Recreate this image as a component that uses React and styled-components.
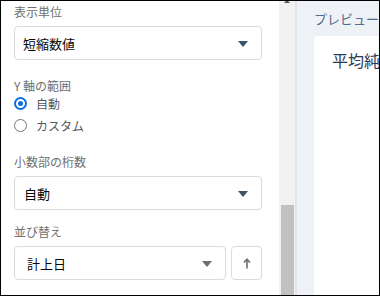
import React from "react";
import styled, { createGlobalStyle } from "styled-components";

const Global = createGlobalStyle`
  html, body { margin: 0; padding: 0; background: #fff; }
  body { font-family: "Noto Sans CJK JP", "Noto Sans", sans-serif; }
  * { box-sizing: border-box; }
`;

const Frame = styled.div`
  width: 380px;
  height: 296px;
  border: 1px solid #000;
  display: flex;
  overflow: hidden;
  background: #fff;
`;

const Settings = styled.div`
  width: 278px;
  flex: none;
  padding: 2px 17px 0 13px;
  display: flex;
  flex-direction: column;
  overflow: hidden;
`;

const Field = styled.div`
  display: flex;
  flex-direction: column;
  gap: ${(p) => p.$gap ?? 5}px;
  margin-bottom: ${(p) => p.$after ?? 0}px;
`;

const Label = styled.div`
  font-size: 12px;
  line-height: 18px;
  color: #706e6b;
  height: 18px;
  white-space: nowrap;
`;

const GroupLabel = styled(Label)`
  line-height: 16px;
  height: 16px;
  margin-top: 1px;
`;

const Row = styled.div`
  display: flex;
  gap: 5px;
`;

const Select = styled.div`
  flex: 1 0 auto;
  min-width: 0;
  height: 34px;
  border: 1px solid #dddbda;
  border-radius: 4px;
  display: flex;
  align-items: center;
  justify-content: space-between;
  padding: 0 ${(p) => p.$padR ?? 13}px 0 ${(p) => p.$padL ?? 8}px;
  font-size: 13px;
  color: #080707;
  background: #fff;
`;

const Caret = styled.span`
  width: 0;
  height: 0;
  border-left: 5px solid transparent;
  border-right: 5px solid transparent;
  border-top: 6px solid ${(p) => p.$color};
  margin-top: 1px;
`;

const IconButton = styled.div`
  width: 31px;
  height: 34px;
  flex: none;
  border: 1px solid #dddbda;
  border-radius: 4px;
  display: flex;
  align-items: center;
  justify-content: center;
  color: #706e6b;
`;

const RadioGroup = styled.div`
  display: flex;
  flex-direction: column;
  gap: 4px;
  margin-bottom: 19px;
`;

const RadioRow = styled.label`
  height: 18px;
  display: flex;
  align-items: center;
  gap: 9px;
  font-size: 12px;
  color: #54565a;
`;

const RadioDot = styled.span`
  width: 13px;
  height: 13px;
  border-radius: 50%;
  flex: none;
  border: ${(p) => (p.$on ? "2px solid #0b6fde" : "1px solid #767676")};
  background: #fff;
  display: flex;
  align-items: center;
  justify-content: center;
  &::after {
    content: "";
    width: 5px;
    height: 5px;
    border-radius: 50%;
    background: ${(p) => (p.$on ? "#0b6fde" : "transparent")};
  }
`;

const Track = styled.div`
  width: 16px;
  flex: none;
  background: #f1f1f1;
  display: flex;
  flex-direction: column;
  justify-content: space-between;
  align-items: center;
  overflow: hidden;
`;

const UpArrow = styled.span`
  width: 0;
  height: 0;
  border-left: 3px solid transparent;
  border-right: 3px solid transparent;
  border-bottom: 3px solid #505050;
  margin-top: -1px;
`;

const Thumb = styled.div`
  width: 13px;
  height: 90px;
  background: #c1c1c1;
  margin-left: 1px;
`;

const Divider = styled.div`
  width: 2px;
  flex: none;
  background: #e2e3ee;
`;

const Preview = styled.div`
  flex: 1;
  background: #eef1f6;
  padding: 9px 0 0 17px;
  display: flex;
  flex-direction: column;
  gap: 8px;
  overflow: hidden;
  min-width: 0;
`;

const PreviewTitle = styled.div`
  font-size: 13px;
  line-height: 18px;
  color: #54698d;
  white-space: nowrap;
`;

const Card = styled.div`
  flex: 1;
  width: 120px;
  background: #fff;
  border-radius: 4px 0 0 0;
  padding: 12px 0 0 18px;
  white-space: nowrap;
  font-size: 16px;
  line-height: 24px;
  color: #2b3a55;
`;

function UpIcon() {
  return (
    <svg width="8" height="11" viewBox="0 0 8 11" fill="none">
      <path d="M4 10.5V1.5" stroke="#706e6b" strokeWidth="1.6" />
      <path d="M1 4.5L4 1.2L7 4.5" stroke="#706e6b" strokeWidth="1.6" fill="none" />
    </svg>
  );
}

export default function App() {
  return (
    <>
      <Global />
      <Frame>
        <Settings>
          <Field $after={17}>
            <Label>表示単位</Label>
            <Select>
              <span>短縮数値</span>
              <Caret $color="#3e5266" />
            </Select>
          </Field>
          <GroupLabel>Y 軸の範囲</GroupLabel>
          <RadioGroup>
            <RadioRow>
              <RadioDot $on />
              自動
            </RadioRow>
            <RadioRow>
              <RadioDot />
              カスタム
            </RadioRow>
          </RadioGroup>
          <Field $after={13}>
            <Label>小数部の桁数</Label>
            <Select $padL={9}>
              <span>自動</span>
              <Caret $color="#3e5266" />
            </Select>
          </Field>
          <Field>
            <Label>並び替え</Label>
            <Row>
              <Select $padL={12}>
                <span>計上日</span>
                <Caret $color="#706e6b" />
              </Select>
              <IconButton>
                <UpIcon />
              </IconButton>
            </Row>
          </Field>
        </Settings>
        <Track>
          <UpArrow />
          <Thumb />
        </Track>
        <Divider />
        <Preview>
          <PreviewTitle>プレビュー</PreviewTitle>
          <Card>平均純売上</Card>
        </Preview>
      </Frame>
    </>
  );
}
